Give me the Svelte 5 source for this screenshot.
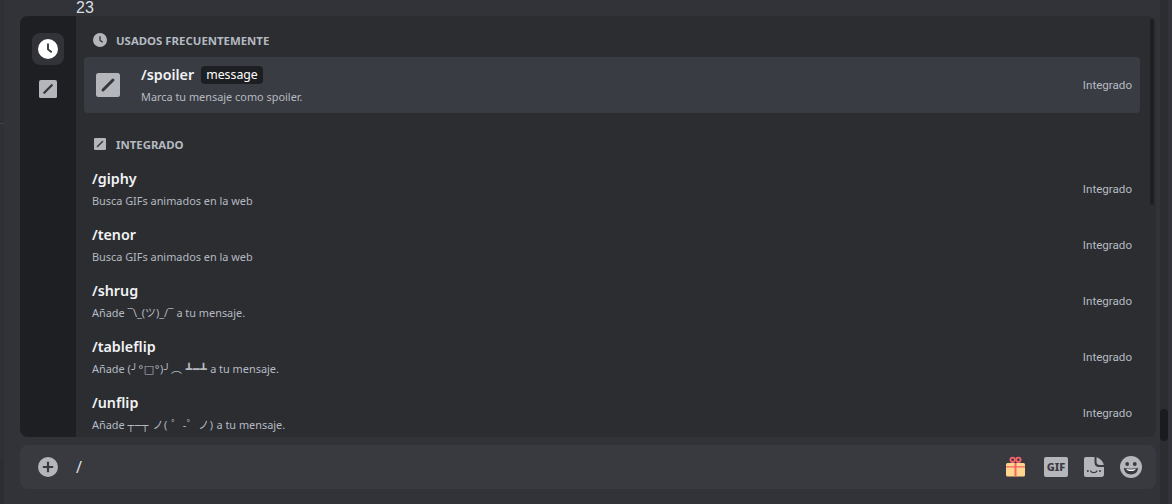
<script>
	const frequent = { name: '/spoiler', option: 'message', desc: 'Marca tu mensaje como spoiler.' };

	const builtin = [
		{ name: '/giphy', desc: 'Busca GIFs animados en la web' },
		{ name: '/tenor', desc: 'Busca GIFs animados en la web' },
		{ name: '/shrug', desc: 'Añade ¯\\_(ツ)_/¯ a tu mensaje.' },
		{ name: '/tableflip', kao: '(╯°□°)╯︵ ┻━┻' },
		{ name: '/unflip', kao: '┬─┬ ノ( ゜-゜ノ)' }
	];
</script>

{#snippet clock(size)}
	<svg width={size} height={size} viewBox="0 0 24 24">
		<circle cx="12" cy="12" r="12" fill="currentColor" />
		<path d="M12 5.5V12.5L16.5 16" fill="none" stroke="var(--cut)" stroke-width="2.2" />
	</svg>
{/snippet}

{#snippet slash(size)}
	<svg width={size} height={size} viewBox="0 0 24 24">
		<rect width="24" height="24" rx="2.5" fill="#b5b6bc" />
		<path d="M7 17L17 7" stroke="#36373d" stroke-width="3" stroke-linecap="round" />
	</svg>
{/snippet}

<div class="page">
	<div class="edge">
		<div class="edge-line"></div>
		<div class="edge-foot"></div>
	</div>
	<main>
		<div class="count">23</div>
		<section class="popup">
			<nav class="rail">
				<div class="rail-btn active">{@render clock(20)}</div>
				<div class="rail-btn">{@render slash(18)}</div>
			</nav>
			<div class="list">
				<h2 class="first"><span class="head-icon clock">{@render clock(14)}</span>USADOS FRECUENTEMENTE</h2>
				<div class="row selected">
					<div class="row-icon">{@render slash(24)}</div>
					<div class="row-main">
						<div class="title">
							{frequent.name}<span class="option">{frequent.option}</span>
						</div>
						<div class="desc">{frequent.desc}</div>
					</div>
					<span class="source">Integrado</span>
				</div>
				<h2><span class="head-icon">{@render slash(12)}</span>INTEGRADO</h2>
				{#each builtin as cmd}
					<div class="row">
						<div class="row-main">
							<div class="title">{cmd.name}</div>
							{#if cmd.kao}
								<div class="desc">Añade <span class="kao">{cmd.kao}</span> a tu mensaje.</div>
							{:else}
								<div class="desc">{cmd.desc}</div>
							{/if}
						</div>
						<span class="source">Integrado</span>
					</div>
				{/each}
			</div>
			<div class="thumb"></div>
		</section>
		<div class="composer">
			<svg class="plus" width="20" height="20" viewBox="0 0 20 20">
				<circle cx="10" cy="10" r="10" fill="#b5b6bc" />
				<path d="M10 4.8V15.2M4.8 10H15.2" stroke="#383a40" stroke-width="2.2" />
			</svg>
			<span class="typed">/</span>
			<div class="actions">
				<svg class="gift" width="22" height="22" viewBox="0 0 22 22">
					<rect x="2" y="7" width="19" height="13.5" rx="1.5" fill="#ffd78c" />
					<rect x="10.5" y="7" width="2" height="13.5" fill="#f8636b" />
					<rect x="2" y="10.2" width="19" height="1.3" fill="#f8636b" />
					<circle cx="8.6" cy="3.8" r="2.2" fill="none" stroke="#f8636b" stroke-width="1.8" />
					<circle cx="14.4" cy="3.8" r="2.2" fill="none" stroke="#f8636b" stroke-width="1.8" />
				</svg>
				<div class="gif">GIF</div>
				<svg width="22" height="22" viewBox="0 0 22 22">
					<path d="M3 1H11.5V6.5C11.5 9.5 13.5 11 16 11H21V18.5C21 20 20 21 18.5 21H3C1.7 21 1 20 1 19V3C1 1.7 1.7 1 3 1Z" fill="#b5b6bc" />
					<path d="M13.5 1.2C16.5 2.2 20 5 20.8 9H16.5C14.8 9 13.5 8 13.5 6Z" fill="#b5b6bc" />
					<circle cx="4.8" cy="15" r="1" fill="#383a40" />
					<circle cx="17" cy="15" r="1" fill="#383a40" />
					<path d="M7.6 15C8.6 17.2 12.8 17.2 14 15" fill="none" stroke="#383a40" stroke-width="1.3" stroke-linecap="round" />
				</svg>
				<svg width="22" height="22" viewBox="0 0 22 22">
					<circle cx="11" cy="11" r="11" fill="#b5b6bc" />
					<circle cx="7.2" cy="8" r="1.9" fill="#383a40" />
					<circle cx="14.8" cy="8" r="1.9" fill="#383a40" />
					<path d="M4 11.8C7 13 15 13 18 11.8C18 16 15 18.5 11 18.5C7 18.5 4 16 4 11.8Z" fill="#383a40" />
					<path d="M6.3 13C8.5 13.6 13.5 13.6 15.7 13C15.2 14.4 13.5 15 11 15C8.5 15 6.8 14.4 6.3 13Z" fill="#fff" />
				</svg>
			</div>
		</div>
	</main>
	<aside class="track"><div class="track-thumb"></div></aside>
</div>

<style>
	:global(body) {
		background: #313338;
	}

	.page {
		display: flex;
		height: 504px;
		overflow: hidden;
		background: #313338;
		font-family: 'Noto Sans', 'DejaVu Sans', 'Noto Sans CJK JP', sans-serif;
	}

	.edge {
		width: 4px;
		display: flex;
		flex-direction: column;
		background: #2e3035;
	}

	.edge-line {
		height: 1px;
		margin-top: 123px;
		background: #3f4147;
	}

	.edge-foot {
		height: 44px;
		margin-top: auto;
		background: #2b2d31;
	}

	main {
		width: 1136px;
		margin-left: 16px;
		flex: none;
	}

	.count {
		height: 16px;
		padding-left: 56px;
		font: 16px/16px 'Liberation Sans', sans-serif;
		color: #dbdee1;
	}

	.popup {
		position: relative;
		display: flex;
		height: 421px;
		border-radius: 8px;
		background: #2b2d31;
		overflow: hidden;
	}

	.rail {
		width: 56px;
		flex: none;
		display: flex;
		flex-direction: column;
		align-items: center;
		gap: 8px;
		padding-top: 17px;
		background: #1e1f22;
	}

	.rail-btn {
		width: 32px;
		height: 32px;
		display: flex;
		align-items: center;
		justify-content: center;
		border-radius: 8px;
		color: #fff;
		--cut: #313338;
	}

	.rail-btn.active {
		background: #313338;
	}

	.list {
		flex: 1;
		padding: 0 16px 0 8px;
	}

	h2 {
		display: flex;
		align-items: center;
		height: 32px;
		margin: 16px 0 0;
		padding: 0 0 2px 9px;
		box-sizing: border-box;
		font-size: 11.4px;
		font-weight: 700;
		color: #b5bac1;
		--cut: #2b2d31;
	}

	h2.first {
		margin: 9px 0 0;
	}

	.head-icon {
		width: 14px;
		display: flex;
		justify-content: center;
		margin-right: 9px;
	}

	.head-icon.clock {
		color: #b5b6bc;
	}

	.row {
		height: 56px;
		display: flex;
		align-items: center;
		padding: 0 8px;
		border-radius: 4px;
	}

	.row.selected {
		background: #3a3c43;
		padding-left: 12px;
	}

	.row-icon {
		width: 24px;
		height: 24px;
		margin-right: 21px;
	}

	.row-main {
		flex: 1;
		margin-top: -2px;
	}

	.title {
		display: flex;
		align-items: center;
		height: 24px;
		font-size: 14.3px;
		font-weight: 600;
		color: #f2f3f5;
	}

	.option {
		margin-left: 7px;
		padding: 0 5px;
		height: 18px;
		line-height: 17px;
		border-radius: 4px;
		background: #1e1f22;
		font-size: 12.3px;
		font-weight: 400;
		color: #fff;
	}

	.desc {
		margin-top: 1px;
		height: 18px;
		line-height: 18px;
		font-size: 10.9px;
		color: #b5bac1;
		white-space: nowrap;
	}

	.kao {
		letter-spacing: 0.6px;
	}

	.source {
		font-family: Roboto, sans-serif;
		font-size: 11.6px;
		color: #b5bac1;
	}

	.thumb {
		position: absolute;
		left: 1130px;
		top: 3px;
		width: 4px;
		height: 186px;
		border-radius: 2px;
		background: #1e1f22;
	}

	.composer {
		display: flex;
		align-items: center;
		height: 44px;
		margin-top: 8px;
		padding: 0 14px 0 18px;
		border-radius: 8px;
		background: #383a40;
	}

	.plus {
		margin-right: 18px;
	}

	.typed {
		flex: 1;
		font-size: 16px;
		color: #dbdee1;
	}

	.actions {
		display: flex;
		align-items: center;
		gap: 15px;
	}

	.gift {
		margin-right: 3px;
	}

	.gif {
		width: 24px;
		height: 20px;
		line-height: 20px;
		border-radius: 2px;
		background: #b5b6bc;
		color: #383a40;
		font-size: 11px;
		font-weight: 800;
		text-align: center;
	}

	.track {
		position: relative;
		width: 8px;
		margin-left: 4px;
		background: #2b2d31;
	}

	.track-thumb {
		position: absolute;
		top: 409px;
		left: 0;
		width: 8px;
		height: 32px;
		border-radius: 4px;
		background: #1a1b1e;
	}
</style>
